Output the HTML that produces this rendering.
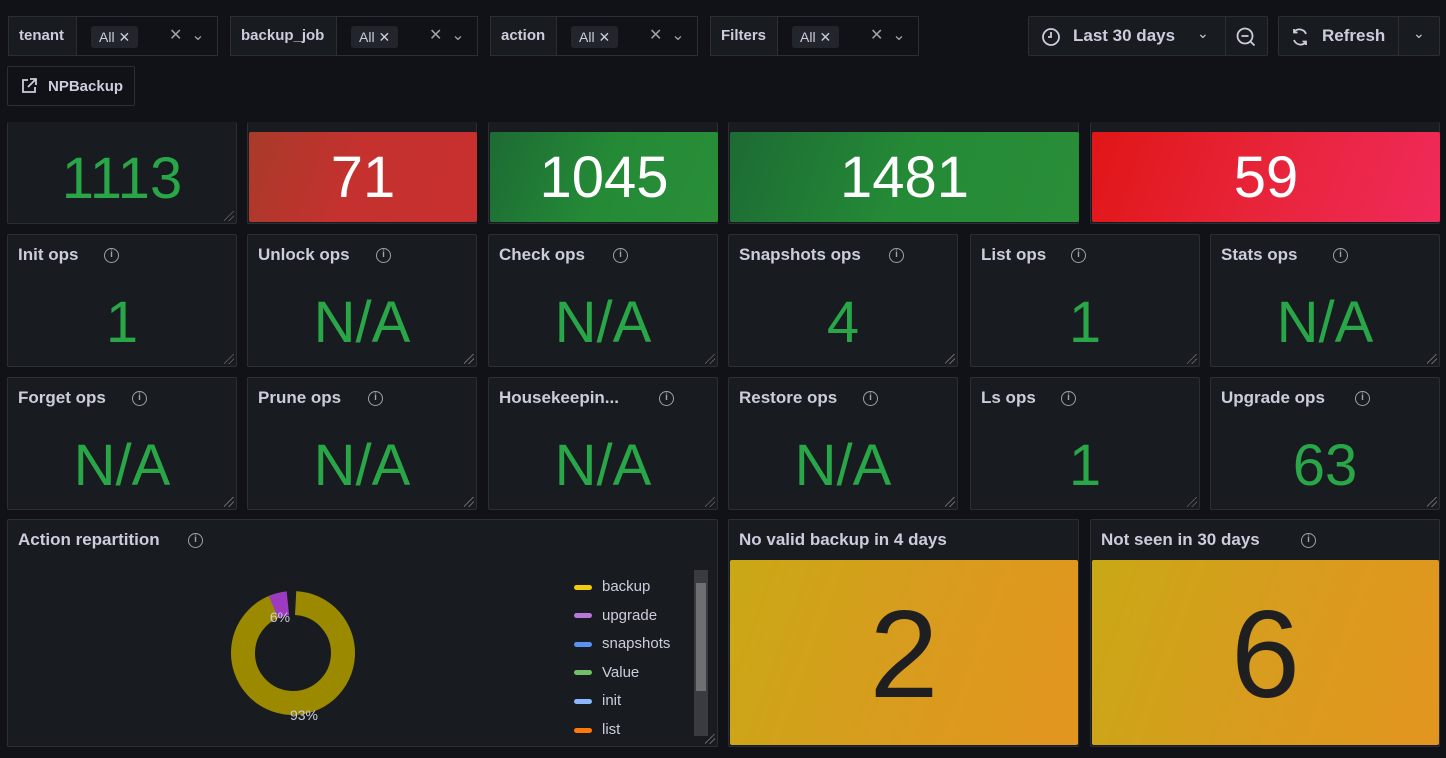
<!DOCTYPE html>
<html><head><meta charset="utf-8"><style>
*{box-sizing:border-box;margin:0;padding:0}
body{width:1446px;height:758px;background:#111217;font-family:"Liberation Sans",sans-serif;color:#ccccdc;position:relative;overflow:hidden}
.a{position:absolute}
.box{position:absolute;border:1px solid #2c2e33;border-radius:2px;background:#181b1f}
.lbl{position:absolute;height:40px;border:1px solid #2c2e33;background:#181b1f;font-size:15px;font-weight:bold;color:#ccccdc;line-height:38px;padding-left:10px}
.sel{position:absolute;height:40px;border:1px solid #2c2e33;background:#111217;border-left:none}
.chip{position:absolute;top:9px;background:#22252b;border-radius:3px;height:22px;line-height:22px;font-size:14px;padding:0 8px;color:#ccccdc}
.xs{position:absolute;top:8px;font-size:16px;color:#9fa1a8}
.p{position:absolute;background:#181b1f;border:1px solid #2c2e33;border-radius:2px}
.t{position:absolute;left:10px;top:10px;font-size:17px;font-weight:bold;color:#ccccdc;white-space:nowrap}
.i{display:inline-block;width:15px;height:15px;border:1.5px solid #9fa1a8;border-radius:50%;position:absolute;top:3px;font-size:10px;line-height:12px;text-align:center;color:#9fa1a8;font-weight:bold}
.v{position:absolute;left:0;right:0;text-align:center;color:#29a647;font-size:58px;line-height:62px}
.c{position:absolute;border-radius:2px;color:#fff;text-align:center;font-size:58px;line-height:92px}
.rz{position:absolute;right:2px;bottom:2px;width:10px;height:10px;background:linear-gradient(135deg,transparent 45%,#666 45%,#666 52%,transparent 52%,transparent 70%,#666 70%,#666 77%,transparent 77%)}
</style></head><body>
<div class="lbl" style="left:8px;top:16px;width:69px">tenant</div>
<div class="sel" style="left:77px;top:16px;width:141px"><span class="chip" style="left:14px">All ✕</span><span class="xs" style="left:92px">✕ &nbsp;⌄</span></div>
<div class="lbl" style="left:230px;top:16px;width:107px">backup_job</div>
<div class="sel" style="left:337px;top:16px;width:141px"><span class="chip" style="left:14px">All ✕</span><span class="xs" style="left:92px">✕ &nbsp;⌄</span></div>
<div class="lbl" style="left:490px;top:16px;width:67px">action</div>
<div class="sel" style="left:557px;top:16px;width:141px"><span class="chip" style="left:14px">All ✕</span><span class="xs" style="left:92px">✕ &nbsp;⌄</span></div>
<div class="lbl" style="left:710px;top:16px;width:68px">Filters</div>
<div class="sel" style="left:778px;top:16px;width:141px"><span class="chip" style="left:14px">All ✕</span><span class="xs" style="left:92px">✕ &nbsp;⌄</span></div>
<div class="box" style="left:1028px;top:16px;width:240px;height:40px;background:#181b1f">
 <svg class="a" style="left:12px;top:10px" width="20" height="20" viewBox="0 0 20 20"><circle cx="10" cy="10" r="8" fill="none" stroke="#ccccdc" stroke-width="1.8"/><path d="M10 5v5H7" fill="none" stroke="#ccccdc" stroke-width="1.8"/></svg>
 <span class="a" style="left:44px;top:9px;font-size:17px;font-weight:bold">Last 30 days</span>
 <span class="a" style="left:168px;top:8px;font-size:14px">⌄</span>
 <div class="a" style="left:196px;top:0;width:1px;height:38px;background:#2c2e33"></div>
 <svg class="a" style="left:206px;top:9px" width="22" height="22" viewBox="0 0 22 22"><circle cx="10" cy="10" r="7.5" fill="none" stroke="#ccccdc" stroke-width="1.8"/><path d="M6.5 10h7M15.5 15.5l4 4" stroke="#ccccdc" stroke-width="1.8"/></svg>
</div>
<div class="box" style="left:1278px;top:16px;width:162px;height:40px;background:#181b1f">
 <svg class="a" style="left:11px;top:10px" width="20" height="20" viewBox="0 0 20 20"><path d="M16 7A7 7 0 0 0 4 5M4 13a7 7 0 0 0 12 2M4 2v3.5h3.5M16 18v-3.5h-3.5" fill="none" stroke="#ccccdc" stroke-width="1.8"/></svg>
 <span class="a" style="left:43px;top:9px;font-size:17px;font-weight:bold">Refresh</span>
 <div class="a" style="left:119px;top:0;width:1px;height:38px;background:#2c2e33"></div>
 <span class="a" style="left:134px;top:8px;font-size:14px">⌄</span>
</div>
<div class="box" style="left:7px;top:66px;width:128px;height:40px;background:#111217">
 <svg class="a" style="left:12px;top:10px" width="18" height="18" viewBox="0 0 18 18"><path d="M8 3H3v12h12v-5M10 2h6v6M16 2L8 10" fill="none" stroke="#ccccdc" stroke-width="1.8"/></svg>
 <span class="a" style="left:40px;top:11px;font-size:15px;font-weight:bold">NPBackup</span>
</div>

<div class="p" style="left:7px;top:122px;width:230px;height:102px;border-top:none"><div class="v" style="top:26px">1113</div><div class="rz"></div></div>
<div class="p" style="left:247px;top:122px;width:230px;height:102px;border-top:none"><div class="c" style="left:1px;top:10px;width:228px;height:90px;background:linear-gradient(110deg,#a83b2a,#c4312e 45%,#c8302f)">71</div></div>
<div class="p" style="left:488px;top:122px;width:230px;height:102px;border-top:none"><div class="c" style="left:1px;top:10px;width:228px;height:90px;background:linear-gradient(110deg,#1d6b34,#248a36 50%,#2a8e38)">1045</div></div>
<div class="p" style="left:728px;top:122px;width:351px;height:102px;border-top:none"><div class="c" style="left:1px;top:10px;width:349px;height:90px;background:linear-gradient(110deg,#1d6b34,#248a36 50%,#2a8e38)">1481</div></div>
<div class="p" style="left:1090px;top:122px;width:350px;height:102px;border-top:none"><div class="c" style="left:1px;top:10px;width:348px;height:90px;background:linear-gradient(110deg,#e01616,#e8243a 50%,#f02a5a)">59</div></div>

<div class="p" style="left:7px;top:234px;width:230px;height:133px"><div class="t">Init ops<span class="i" style="left:86px">i</span></div><div class="v" style="top:57px">1</div><div class="rz"></div></div>
<div class="p" style="left:247px;top:234px;width:230px;height:133px"><div class="t">Unlock ops<span class="i" style="left:118px">i</span></div><div class="v" style="top:57px">N/A</div><div class="rz"></div></div>
<div class="p" style="left:488px;top:234px;width:230px;height:133px"><div class="t">Check ops<span class="i" style="left:114px">i</span></div><div class="v" style="top:57px">N/A</div><div class="rz"></div></div>
<div class="p" style="left:728px;top:234px;width:230px;height:133px"><div class="t">Snapshots ops<span class="i" style="left:150px">i</span></div><div class="v" style="top:57px">4</div><div class="rz"></div></div>
<div class="p" style="left:970px;top:234px;width:230px;height:133px"><div class="t">List ops<span class="i" style="left:90px">i</span></div><div class="v" style="top:57px">1</div><div class="rz"></div></div>
<div class="p" style="left:1210px;top:234px;width:230px;height:133px"><div class="t">Stats ops<span class="i" style="left:112px">i</span></div><div class="v" style="top:57px">N/A</div><div class="rz"></div></div>

<div class="p" style="left:7px;top:377px;width:230px;height:133px"><div class="t">Forget ops<span class="i" style="left:114px">i</span></div><div class="v" style="top:57px">N/A</div><div class="rz"></div></div>
<div class="p" style="left:247px;top:377px;width:230px;height:133px"><div class="t">Prune ops<span class="i" style="left:110px">i</span></div><div class="v" style="top:57px">N/A</div><div class="rz"></div></div>
<div class="p" style="left:488px;top:377px;width:230px;height:133px"><div class="t">Housekeepin...<span class="i" style="left:160px">i</span></div><div class="v" style="top:57px">N/A</div><div class="rz"></div></div>
<div class="p" style="left:728px;top:377px;width:230px;height:133px"><div class="t">Restore ops<span class="i" style="left:124px">i</span></div><div class="v" style="top:57px">N/A</div><div class="rz"></div></div>
<div class="p" style="left:970px;top:377px;width:230px;height:133px"><div class="t">Ls ops<span class="i" style="left:80px">i</span></div><div class="v" style="top:57px">1</div><div class="rz"></div></div>
<div class="p" style="left:1210px;top:377px;width:230px;height:133px"><div class="t">Upgrade ops<span class="i" style="left:134px">i</span></div><div class="v" style="top:57px">63</div><div class="rz"></div></div>

<div class="p" style="left:7px;top:519px;width:711px;height:228px"><div class="t">Action repartition<span class="i" style="left:170px">i</span></div>
 <svg class="a" style="left:212px;top:60px" width="150" height="150" viewBox="0 0 150 150">
  <circle cx="73" cy="73" r="50" fill="none" stroke="#9b8a00" stroke-width="24" stroke-dasharray="293 21" transform="rotate(-87 73 73)"/>
  <circle cx="73" cy="73" r="50" fill="none" stroke="#9c3bbf" stroke-width="24" stroke-dasharray="15 300" transform="rotate(-113 73 73)"/>
  <text x="60" y="42" fill="#ccccdc" font-size="14" font-family="Liberation Sans" text-anchor="middle">6%</text>
  <text x="84" y="140" fill="#ccccdc" font-size="14" font-family="Liberation Sans" text-anchor="middle">93%</text>
 </svg>
 <div class="a" style="left:566px;top:53px;font-size:15px;line-height:28.6px">
  <div><span style="display:inline-block;width:18px;height:5px;border-radius:3px;background:#f2cc0c;vertical-align:middle;margin-right:10px"></span>backup</div>
  <div><span style="display:inline-block;width:18px;height:5px;border-radius:3px;background:#b877d9;vertical-align:middle;margin-right:10px"></span>upgrade</div>
  <div><span style="display:inline-block;width:18px;height:5px;border-radius:3px;background:#5794f2;vertical-align:middle;margin-right:10px"></span>snapshots</div>
  <div><span style="display:inline-block;width:18px;height:5px;border-radius:3px;background:#73bf69;vertical-align:middle;margin-right:10px"></span>Value</div>
  <div><span style="display:inline-block;width:18px;height:5px;border-radius:3px;background:#8ab8ff;vertical-align:middle;margin-right:10px"></span>init</div>
  <div><span style="display:inline-block;width:18px;height:5px;border-radius:3px;background:#ff780a;vertical-align:middle;margin-right:10px"></span>list</div>
 </div>
 <div class="a" style="left:686px;top:50px;width:14px;height:166px;background:#3a3b40"><div style="margin:13px 2px 0;height:108px;background:#6e6f73"></div></div>
 <div class="rz"></div>
</div>
<div class="p" style="left:728px;top:519px;width:351px;height:228px"><div class="t">No valid backup in 4 days</div>
 <div class="c" style="left:1px;top:40px;width:348px;height:185px;background:linear-gradient(110deg,#c9a815,#d89c1e 50%,#e2951f);color:#1f1f22;font-size:124px;line-height:190px">2</div></div>
<div class="p" style="left:1090px;top:519px;width:350px;height:228px"><div class="t">Not seen in 30 days<span class="i" style="left:200px">i</span></div>
 <div class="c" style="left:1px;top:40px;width:347px;height:185px;background:linear-gradient(110deg,#c9a815,#d89c1e 50%,#e2951f);color:#1f1f22;font-size:124px;line-height:190px">6</div></div>
</body></html>
